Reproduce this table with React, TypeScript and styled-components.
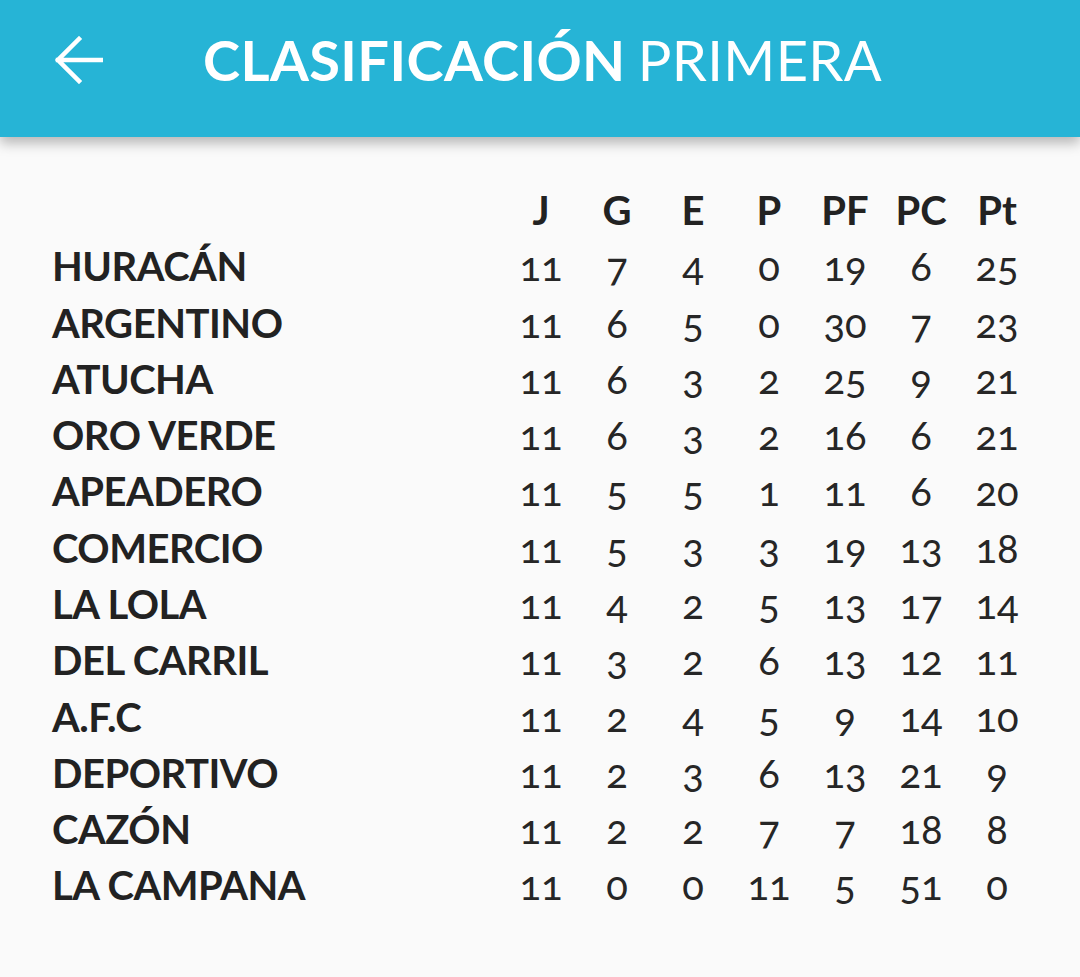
import React from "react";
import styled, { createGlobalStyle } from "styled-components";

const Global = createGlobalStyle`
  html, body { margin: 0; padding: 0; background: #fafafa; }
  body { font-family: Lato, "Open Sans", sans-serif; }
`;

const Page = styled.div`
  width: 1080px;
  height: 977px;
  background: #fafafa;
  overflow: hidden;
`;

const AppBar = styled.header`
  height: 137px;
  background: #26b4d6;
  display: flex;
  align-items: center;
  padding-left: 55px;
  padding-bottom: 18px;
  box-sizing: border-box;
  box-shadow: 0 6px 12px rgba(0, 0, 0, 0.28);
  position: relative;
  z-index: 1;
`;

const BackButton = styled.div`
  width: 48px;
  height: 48px;
  display: flex;
  align-items: center;
  justify-content: center;
`;

const Title = styled.h1`
  margin: 0 0 0 100px;
  color: #ffffff;
  font-family: Lato, sans-serif;
  font-size: 56px;
  line-height: 1;
  font-weight: 400;
  letter-spacing: 0.4px;
  white-space: nowrap;
`;

const TitleStrong = styled.span`
  font-weight: 700;
  margin-right: 12px;
`;

const Table = styled.main`
  display: grid;
  grid-template-columns: 1fr repeat(7, 76px);
  grid-auto-rows: 56.27px;
  align-items: center;
  padding: 45px 45px 0 52px;
  color: #222222;
`;

const Spacer = styled.div``;

const HeadCell = styled.div`
  font-family: Lato, sans-serif;
  font-weight: 700;
  font-size: 40px;
  text-align: center;
`;

const NameCell = styled.div`
  font-family: Lato, sans-serif;
  font-weight: 700;
  font-size: 40px;
  letter-spacing: -0.5px;
  white-space: nowrap;
`;

const NumCell = styled.div`
  font-family: Lato, sans-serif;
  font-weight: 400;
  font-size: 40px;
  text-align: center;
  color: #262626;
  font-variant-numeric: oldstyle-nums;
  font-feature-settings: "onum" 1;
`;

const cols = ["J", "G", "E", "P", "PF", "PC", "Pt"];

const rows: [string, number[]][] = [
  ["HURACÁN", [11, 7, 4, 0, 19, 6, 25]],
  ["ARGENTINO", [11, 6, 5, 0, 30, 7, 23]],
  ["ATUCHA", [11, 6, 3, 2, 25, 9, 21]],
  ["ORO VERDE", [11, 6, 3, 2, 16, 6, 21]],
  ["APEADERO", [11, 5, 5, 1, 11, 6, 20]],
  ["COMERCIO", [11, 5, 3, 3, 19, 13, 18]],
  ["LA LOLA", [11, 4, 2, 5, 13, 17, 14]],
  ["DEL CARRIL", [11, 3, 2, 6, 13, 12, 11]],
  ["A.F.C", [11, 2, 4, 5, 9, 14, 10]],
  ["DEPORTIVO", [11, 2, 3, 6, 13, 21, 9]],
  ["CAZÓN", [11, 2, 2, 7, 7, 18, 8]],
  ["LA CAMPANA", [11, 0, 0, 11, 5, 51, 0]],
];

export default function App() {
  return (
    <Page>
      <Global />
      <AppBar>
        <BackButton>
          <svg width="48" height="48" viewBox="0 0 48 48" fill="none">
            <path
              d="M46 24H3M24 3L3 24L24 45"
              stroke="#ffffff"
              strokeWidth="4.5"
              strokeLinecap="square"
              strokeLinejoin="miter"
            />
          </svg>
        </BackButton>
        <Title>
          <TitleStrong>CLASIFICACIÓN</TitleStrong>PRIMERA
        </Title>
      </AppBar>
      <Table>
        <Spacer />
        {cols.map((c) => (
          <HeadCell key={c}>{c}</HeadCell>
        ))}
        {rows.map(([name, vals]) => (
          <React.Fragment key={name}>
            <NameCell>{name}</NameCell>
            {vals.map((v, i) => (
              <NumCell key={i}>{v}</NumCell>
            ))}
          </React.Fragment>
        ))}
      </Table>
    </Page>
  );
}
